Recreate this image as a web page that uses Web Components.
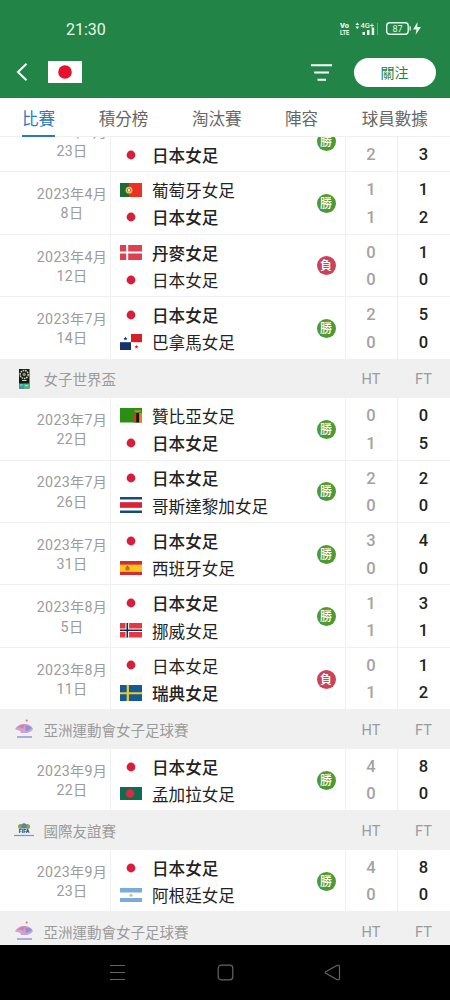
<!DOCTYPE html>
<html lang="zh-Hant">
<head>
  <meta charset="UTF-8">
  <meta name="viewport" content="width=device-width, initial-scale=1.0">
  <title>日本女足 - 比賽</title>
  <style>
    body {
      margin: 0;
      width: 450px;
      height: 1000px;
      overflow: hidden;
      display: flex;
      flex-direction: column;
      background: #fff;
      font-family: Roboto, "Noto Sans CJK TC", sans-serif;
      --green: #238447;
      --line: #f0f0f0;
      --muted: #9b9b9b;
    }
  </style>
</head>
<body>
  <status-bar>21:30</status-bar>
  <team-header>關注</team-header>
  <tab-strip>
    <tab-item active>比賽</tab-item>
    <tab-item>積分榜</tab-item>
    <tab-item>淘汰賽</tab-item>
    <tab-item>陣容</tab-item>
    <tab-item>球員數據</tab-item>
  </tab-strip>
  <match-list></match-list>
  <nav-bar></nav-bar>

  <script>
    const FLAGS = {
      jp: [14, '<circle cx="11" cy="7" r="4.4" fill="#d81e3d"/>'],
      pt: [14.5, '<rect width="22" height="14.5" fill="#ea3323"/><rect width="9" height="14.5" fill="#1d6b37"/><circle cx="9" cy="7.2" r="3.4" fill="#e6c54c"/><circle cx="9" cy="7.2" r="2" fill="#d9594a"/><rect x="8" y="6" width="2" height="2.5" fill="#f6e9dc"/>'],
      dk: [15, '<rect width="22" height="15" fill="#dc4152"/><path d="M7.2 0v15M0 7.5h22" stroke="#fff" stroke-width="2"/>'],
      pa: [16.5, '<rect width="22" height="16.5" fill="#fff"/><rect x="11" width="11" height="8.2" fill="#d81e28"/><rect y="8.2" width="11" height="8.3" fill="#14316b"/><path d="M5.5 2.5l.6 1.5h1.5l-1.2 1 .4 1.5-1.3-.9-1.3.9.4-1.5-1.2-1h1.5z" fill="#14316b"/><path d="M16.5 10.7l.6 1.5h1.5l-1.2 1 .4 1.5-1.3-.9-1.3.9.4-1.5-1.2-1h1.5z" fill="#d81e28"/>'],
      zm: [14.5, '<rect width="22" height="14.5" fill="#2b8f16"/><rect x="13.5" y="5" width="3" height="9.5" fill="#d83525"/><rect x="16.3" y="5" width="3" height="9.5" fill="#17130e"/><rect x="19.2" y="5" width="2.8" height="9.5" fill="#ef7d24"/><path d="M14 3.2q2-2 3.5-.5 2-1.500 4 .5l-3 1h-2z" fill="#d58b25"/>'],
      cr: [16, '<rect width="22" height="16" fill="#fff"/><path d="M0 1.200h22M0 14.800h22" stroke="#164b7c" stroke-width="2.400"/><rect y="5.200" width="22" height="5.600" fill="#db2038"/>'],
      es: [14.5, '<rect width="22" height="14.5" fill="#d62b37"/><rect y="3.600" width="22" height="7.300" fill="#fbc51d"/><rect x="5.500" y="5.800" width="4" height="3.800" rx="1" fill="#c66b24"/><rect x="6.700" y="4.700" width="1.500" height="1.500" fill="#a95426"/>'],
      no: [14.5, '<rect width="22" height="14.5" fill="#e13842"/><path d="M7.300 0v14.500M0 7.250h22" stroke="#fff" stroke-width="3.600"/><path d="M7.300 0v14.500M0 7.250h22" stroke="#15285b" stroke-width="1.600"/>'],
      se: [16.5, '<rect width="22" height="16.5" fill="#145b96"/><path d="M7.800 0v16.500M0 8.250h22" stroke="#f5cb22" stroke-width="2.200"/>'],
      bd: [13, '<rect width="22" height="13" fill="#126a50"/><circle cx="10" cy="6.500" r="4.200" fill="#d92b3c"/>'],
      ar: [14.5, '<rect width="22" height="14.5" fill="#fff"/><path d="M0 2.300h22M0 12.200h22" stroke="#78addb" stroke-width="4.600"/><circle cx="11" cy="7.250" r="1.500" fill="#dfbd6a"/>']
    };

    const EMBLEMS = {
      worldcup: `
        <rect x="5" y="1" width="10.500" height="19.500" fill="#151a17"/>
        <circle cx="10.200" cy="6.500" r="4" fill="none" stroke="#d0cca9" stroke-width="1.500" stroke-dasharray="1.700 .7"/>
        <circle cx="10.200" cy="6.500" r="1.700" fill="#8c9a80"/>
        <path d="M8 12.500h4.500" stroke="#d6d6cc" stroke-width="1"/>
        <rect x="5" y="15.500" width="5" height="5" fill="#2d9fb3"/><rect x="10" y="15.500" width="5.500" height="5" fill="#4dba83"/>
        <path d="M6 17h3M11 17.500h3" stroke="#b6e8dc" stroke-width=".8"/>`,
      asian: `
        <path d="M1 10.500C2.500 7 6 5 10 5c4-.3 8 2 9 5-1 2-3 3-6 4H6.500q1-2-1.500-2.500z" fill="#cda1d1"/>
        <path d="M3 9q4-4 8-3.500l-2 4q-3-1.500-6-.5" fill="#dc7d92"/><path d="M11 6.500q5-.5 7 2.500l-6 3.500z" fill="#9291d5"/>
        <circle cx="12.700" cy="1.500" r="1" fill="#dd6c6a"/>
        <path d="M3 18h15" stroke="#9aa5da" stroke-width="1.700"/>`,
      fifa: `
        <circle cx="6.500" cy="6.500" r="2.500" fill="#8fa05c"/><circle cx="13.500" cy="6.500" r="2.500" fill="#8fa05c"/>
        <circle cx="10" cy="6" r="2.700" fill="#5c83a4"/>
        <text x="10" y="13.300" text-anchor="middle" font-family="Roboto" font-weight="900" font-size="5.300" fill="#164b96">FIFA</text>
        <path d="M0 15.500h20" stroke="#7897bd" stroke-width="1.200"/>`
    };

    const MATCHES = [
      { date: ['2023年2月', '23日'], result: '勝', teams: [null, ['jp', '日本女足', 2, 3, true]] },
      { date: ['2023年4月', '8日'], result: '勝', teams: [['pt', '葡萄牙女足', 1, 1], ['jp', '日本女足', 1, 2, true]] },
      { date: ['2023年4月', '12日'], result: '負', teams: [['dk', '丹麥女足', 0, 1, true], ['jp', '日本女足', 0, 0]] },
      { date: ['2023年7月', '14日'], result: '勝', teams: [['jp', '日本女足', 2, 5, true], ['pa', '巴拿馬女足', 0, 0]] },
      { group: '女子世界盃', emblem: 'worldcup' },
      { date: ['2023年7月', '22日'], result: '勝', teams: [['zm', '贊比亞女足', 0, 0], ['jp', '日本女足', 1, 5, true]] },
      { date: ['2023年7月', '26日'], result: '勝', teams: [['jp', '日本女足', 2, 2, true], ['cr', '哥斯達黎加女足', 0, 0]] },
      { date: ['2023年7月', '31日'], result: '勝', teams: [['jp', '日本女足', 3, 4, true], ['es', '西班牙女足', 0, 0]] },
      { date: ['2023年8月', '5日'], result: '勝', teams: [['jp', '日本女足', 1, 3, true], ['no', '挪威女足', 1, 1]] },
      { date: ['2023年8月', '11日'], result: '負', teams: [['jp', '日本女足', 0, 1], ['se', '瑞典女足', 1, 2, true]] },
      { group: '亞洲運動會女子足球賽', emblem: 'asian' },
      { date: ['2023年9月', '22日'], result: '勝', teams: [['jp', '日本女足', 4, 8, true], ['bd', '孟加拉女足', 0, 0]] },
      { group: '國際友誼賽', emblem: 'fifa' },
      { date: ['2023年9月', '23日'], result: '勝', teams: [['jp', '日本女足', 4, 8, true], ['ar', '阿根廷女足', 0, 0]] },
      { group: '亞洲運動會女子足球賽', emblem: 'asian' }
    ];

    class StatusBar extends HTMLElement {
      constructor() {
        super();
        this.attachShadow({ mode: 'open' });
        this.shadowRoot.innerHTML = /*html*/ `
          <style>
            :host {
              display: flex;
              align-items: center;
              justify-content: space-between;
              flex: none;
              height: 46px;
              padding: 12px 28px 0 66px;
              box-sizing: border-box;
              background: var(--green);
              color: #e6f8e9;
              font-size: 16px;
            }
            svg { display: block; }
          </style>
          <slot></slot>
          <svg width="82" height="16" viewBox="0 0 82 16" fill="#e6f8e9" font-family="Roboto">
            <text x="0" y="7" font-size="7.500" font-weight="900" textLength="9">Vo</text>
            <text x="0" y="14" font-size="7.500" font-weight="900" textLength="9" lengthAdjust="spacingAndGlyphs">LTE</text>
            <path d="M15.300 4l2-2.500 2 2.500zM15.300 5.500h4l-2 2.500z"/>
            <text x="20.500" y="6.500" font-size="7.500" font-weight="500" textLength="13.500" lengthAdjust="spacingAndGlyphs">4G+</text>
            <path d="M22.500 11h2.500v3h-2.500zM27 9h2.500v5H27zM31.700 6.500h2.500v7.500h-2.500z"/>
            <path d="M37.500 2v12" stroke="#5da878" stroke-width="1"/>
            <rect x="46.700" y="1.700" width="21.500" height="11.500" rx="3" fill="none" stroke="#e6f8e9" stroke-width="1.400"/>
            <path d="M69.500 5.300h1.300v4.300h-1.300z"/>
            <text x="57.500" y="10.800" font-size="9" text-anchor="middle">87</text>
            <path d="M77.500 1l-4.500 7.500h3.500L75.500 14l5.500-8h-3.700z"/>
          </svg>
        `;
      }
    }

    class TeamHeader extends HTMLElement {
      constructor() {
        super();
        this.attachShadow({ mode: 'open' });
        this.shadowRoot.innerHTML = /*html*/ `
          <style>
            :host {
              display: flex;
              align-items: center;
              flex: none;
              height: 52px;
              padding: 0 14.500px 0 16px;
              box-sizing: border-box;
              background: var(--green);
            }
            svg { display: block; }
            .flag { margin-left: 20px; }
            .filter { margin-left: auto; }
            button {
              width: 82px;
              height: 29px;
              margin: 0 0 0 21.500px;
              padding: 1px 0 0;
              border: none;
              border-radius: 15px;
              background: #fff;
              color: #238447;
              font: 400 14px/28px Roboto, "Noto Sans CJK TC", sans-serif;
            }
          </style>
          <svg width="12" height="20" viewBox="0 0 12 20"><path d="M10.500 1.800L2 10l8.500 8.200" fill="none" stroke="#fff" stroke-width="2"/></svg>
          <svg class="flag" width="34" height="22"><rect width="34" height="22" fill="#fff"/><circle cx="17" cy="11" r="6.800" fill="#e8112d"/></svg>
          <svg class="filter" width="21" height="18" viewBox="0 0 21 18"><path d="M0 2.200h21M3.200 9.500h14.800M6.500 16.800h8.500" stroke="#fff" stroke-width="1.900"/></svg>
          <button><slot></slot></button>
        `;
      }
    }

    class TabStrip extends HTMLElement {
      constructor() {
        super();
        this.attachShadow({ mode: 'open' });
        this.shadowRoot.innerHTML = /*html*/ `
          <style>
            :host {
              display: flex;
              gap: 43.700px;
              flex: none;
              height: 39px;
              padding: 0 22px;
              box-sizing: border-box;
              border-bottom: 1px solid var(--line);
            }
          </style>
          <slot></slot>
        `;
      }
    }

    class TabItem extends HTMLElement {
      constructor() {
        super();
        this.attachShadow({ mode: 'open' });
        this.shadowRoot.innerHTML = /*html*/ `
          <style>
            :host {
              display: block;
              flex: none;
              height: 37px;
              color: #666;
              font-size: 16.500px;
              line-height: 43px;
              white-space: nowrap;
            }
            :host([active]) {
              color: #2878c2;
              border-bottom: 2px solid #2878c2;
            }
          </style>
          <slot></slot>
        `;
      }
    }

    class TeamFlag extends HTMLElement {
      constructor() {
        super();
        this.attachShadow({ mode: 'open' });
      }

      connectedCallback() {
        const [height, shapes] = FLAGS[this.getAttribute('code')];
        this.shadowRoot.innerHTML = /*html*/ `
          <style>
            :host { display: block; flex: none; width: 22px; }
            svg { display: block; }
          </style>
          <svg width="22" height="${height}" viewBox="0 0 22 ${height}">${shapes}</svg>
        `;
      }
    }

    class ResultBadge extends HTMLElement {
      constructor() {
        super();
        this.attachShadow({ mode: 'open' });
        this.shadowRoot.innerHTML = /*html*/ `
          <style>
            :host {
              display: block;
              flex: none;
              width: 19px;
              height: 19px;
              border-radius: 50%;
              background: #4c9a35;
              color: #fff;
              font-size: 12px;
              font-weight: 500;
              line-height: 20px;
              text-align: center;
            }
            :host([lost]) { background: #cb4358; }
          </style>
          <slot></slot>
        `;
      }
    }

    class MatchRow extends HTMLElement {
      constructor() {
        super();
        this.attachShadow({ mode: 'open' });
      }

      set match(match) {
        const team = t => t ? `
          <div class="team${t[4] ? ' winner' : ''}"><team-flag code="${t[0]}"></team-flag><span>${t[1]}</span></div>
        ` : '<div class="team"></div>';
        const score = (t, i) => `<div class="score">${t ? t[i] : ''}</div>`;

        this.shadowRoot.innerHTML = /*html*/ `
          <style>
            :host {
              display: grid;
              grid-template-columns: 110px 235px 52px 53px;
              flex: none;
              height: 62.450px;
              box-sizing: border-box;
              border-bottom: 1px solid var(--line);
            }
            .date {
              display: flex;
              flex-direction: column;
              justify-content: center;
              padding: 3px 0 0 34px;
              color: var(--muted);
              font-size: 14.200px;
              line-height: 19.400px;
              letter-spacing: 0.300px;
              text-align: center;
              white-space: nowrap;
            }
            .match, .ht, .ft {
              border-left: 1px solid var(--line);
            }
            .match {
              display: flex;
              align-items: center;
              justify-content: space-between;
              padding: 1px 9.500px 0 9px;
            }
            .team {
              display: flex;
              align-items: center;
              gap: 10px;
              height: 27.300px;
              color: #222;
              font-size: 16.600px;
              white-space: nowrap;
            }
            .team span { padding-top: 0.500px; }
            .winner { font-weight: 500; }
            .ht, .ft {
              padding: 4.200px 1px 0 0;
              font-size: 16.500px;
              font-weight: 500;
              text-align: center;
            }
            .score {
              height: 27.300px;
              line-height: 27.300px;
            }
            .ht { color: #a3a3a3; }
            .ft { color: #222; }
          </style>
          <div class="date"><div>${match.date[0]}</div><div>${match.date[1]}</div></div>
          <div class="match">
            <div>${match.teams.map(team).join('')}</div>
            <result-badge ${match.result === '負' ? 'lost' : ''}>${match.result}</result-badge>
          </div>
          <div class="ht">${match.teams.map(t => score(t, 2)).join('')}</div>
          <div class="ft">${match.teams.map(t => score(t, 3)).join('')}</div>
        `;
      }
    }

    class GroupHeader extends HTMLElement {
      constructor() {
        super();
        this.attachShadow({ mode: 'open' });
      }

      connectedCallback() {
        this.shadowRoot.innerHTML = /*html*/ `
          <style>
            :host {
              display: grid;
              grid-template-columns: 20px 1fr 52px 53px;
              align-items: center;
              flex: none;
              height: 38.600px;
              padding-left: 14px;
              box-sizing: border-box;
              background: #f0f0f0;
              color: var(--muted);
              font-size: 14.500px;
            }
            svg { display: block; }
            .name { padding: 0 0 1px 9.500px; }
            .col { text-align: center; padding-top: 1px; }
          </style>
          <svg width="20" height="21" viewBox="0 0 20 21">${EMBLEMS[this.getAttribute('emblem')]}</svg>
          <div class="name"><slot></slot></div>
          <div class="col">HT</div>
          <div class="col">FT</div>
        `;
      }
    }

    class MatchList extends HTMLElement {
      constructor() {
        super();
        this.attachShadow({ mode: 'open' });
        this.shadowRoot.innerHTML = /*html*/ `
          <style>
            :host {
              display: block;
              flex: 1;
              min-height: 0;
              overflow: hidden;
            }
            /* list is scrolled part way into its first row */
            .rows {
              display: flex;
              flex-direction: column;
              margin-top: -27.200px;
            }
          </style>
          <div class="rows"></div>
        `;
      }

      connectedCallback() {
        const rows = this.shadowRoot.querySelector('.rows');
        MATCHES.forEach(item => {
          const el = document.createElement(item.group ? 'group-header' : 'match-row');
          if (item.group) {
            el.setAttribute('emblem', item.emblem);
            el.textContent = item.group;
          } else {
            el.match = item;
          }
          rows.appendChild(el);
        });
      }
    }

    class NavBar extends HTMLElement {
      constructor() {
        super();
        this.attachShadow({ mode: 'open' });
        this.shadowRoot.innerHTML = /*html*/ `
          <style>
            :host {
              display: flex;
              align-items: center;
              justify-content: space-between;
              flex: none;
              height: 55px;
              padding: 0 109px;
              box-sizing: border-box;
              background: #000;
            }
            svg { display: block; fill: none; stroke: #646464; stroke-width: 1.200; }
          </style>
          <svg width="17" height="17"><path d="M1 1.500h15M1 8.500h15M1 15.500h15"/></svg>
          <svg width="17" height="17"><rect x="1.200" y="1.200" width="14.600" height="14.600" rx="3"/></svg>
          <svg width="17" height="17"><path d="M1.800 7.700L12.700 1.600Q15.500 .5 15.500 3v11q0 2.500-2.800 1.400L1.800 9.300q-1-.8 0-1.600z"/></svg>
        `;
      }
    }

    customElements.define('status-bar', StatusBar);
    customElements.define('team-header', TeamHeader);
    customElements.define('tab-strip', TabStrip);
    customElements.define('tab-item', TabItem);
    customElements.define('team-flag', TeamFlag);
    customElements.define('result-badge', ResultBadge);
    customElements.define('match-row', MatchRow);
    customElements.define('group-header', GroupHeader);
    customElements.define('match-list', MatchList);
    customElements.define('nav-bar', NavBar);
  </script>
</body>
</html>
